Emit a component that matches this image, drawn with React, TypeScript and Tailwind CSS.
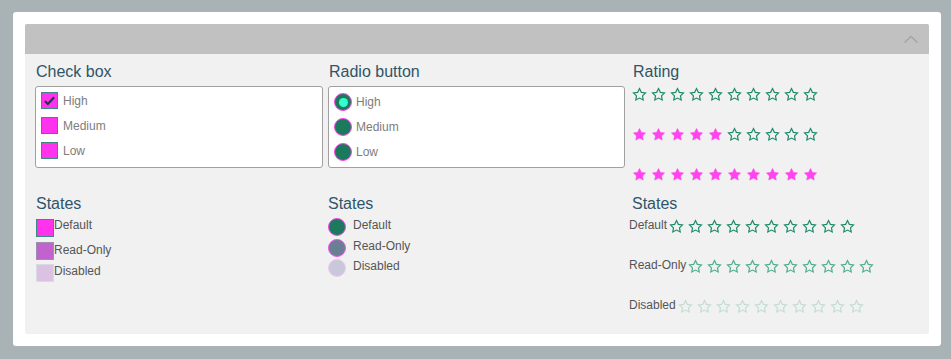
import React from "react";

const STAR = "M12 2.5l2.95 6.1 6.65.95-4.8 4.7 1.15 6.6L12 17.7l-5.95 3.15 1.15-6.6-4.8-4.7 6.65-.95z";

function Star({ filled, color, size = 15 }: { filled: boolean; color: string; size?: number }) {
  return (
    <svg width={size} height={size} viewBox="0 0 24 24" className="shrink-0">
      <path
        d={STAR}
        fill={filled ? color : "none"}
        stroke={color}
        strokeWidth={filled ? 1 : 1.9}
        strokeLinejoin="miter"
      />
    </svg>
  );
}

function Stars({ n, filledColor, outline, size = 15 }: { n: number; filledColor: string; outline: string; size?: number }) {
  return (
    <div className="flex gap-[4px]">
      {Array.from({ length: 10 }).map((_, i) => (
        <Star key={i} filled={i < n} color={i < n ? filledColor : outline} size={size} />
      ))}
    </div>
  );
}

function Check({ checked }: { checked?: boolean }) {
  return (
    <div className="w-[17px] h-[17px] bg-[#ff33ee] border border-[#3a8a82] flex items-center justify-center shrink-0">
      {checked && (
        <svg width="13" height="13" viewBox="0 0 14 14">
          <path d="M2 7.5l3.2 3.2L12 3.5" fill="none" stroke="#1f3445" strokeWidth="2.2" />
        </svg>
      )}
    </div>
  );
}

function Radio({ selected }: { selected?: boolean }) {
  return (
    <div className="w-[18px] h-[18px] rounded-full bg-[#1b7a5e] border-[1.5px] border-[#ff44ee] flex items-center justify-center shrink-0">
      {selected && <div className="w-[9px] h-[9px] rounded-full bg-[#33ffcc]" />}
    </div>
  );
}

const font = { fontFamily: "'Liberation Sans', Arial, sans-serif" };

export default function App() {
  return (
    <div className="w-[951px] h-[359px] bg-[#a9b2b4] pt-[12px] pl-[13px] pr-[10px] pb-[13px]" style={font}>
      <div className="w-full h-full bg-white rounded-[3px] p-[12px]">
        <div className="w-full h-full bg-[#f1f1f1] rounded-[2px] flex flex-col">
          <div className="h-[30px] bg-[#c1c1c1] rounded-t-[2px] flex items-center justify-end pr-[10px]">
            <svg width="16" height="10" viewBox="0 0 16 10">
              <path d="M1.5 8.5L8 2.5l6.5 6" fill="none" stroke="#a4a4a4" strokeWidth="1.4" />
            </svg>
          </div>
          <div className="flex pl-[10px] pt-[8px]">
            {/* Check box column */}
            <div className="w-[288px] flex flex-col">
              <div className="text-[16px] leading-[20px] text-[#2f5568] h-[24px] pl-[1px]">Check box</div>
              <div className="h-[82px] bg-white border border-[#a0a0a0] rounded-[3px] pl-[5px] pt-[5px] flex flex-col gap-[8px]">
                {["High", "Medium", "Low"].map((l, i) => (
                  <div key={l} className="flex items-center gap-[5px] h-[17px]">
                    <Check checked={i === 0} />
                    <span className="text-[12px] text-[#7d7d7d]">{l}</span>
                  </div>
                ))}
              </div>
              <div className="mt-[26px] text-[16px] leading-[20px] text-[#2f5568] pl-[1px]">States</div>
              <div className="flex flex-col gap-[4.5px] pl-[1px] mt-[5px]">
                <div className="flex items-start h-[18px]">
                  <div className="w-[18px] h-[18px] bg-[#ff33ee] border border-[#3a8a82]" />
                  <span className="text-[12px] leading-[12px] text-[#555]">Default</span>
                </div>
                <div className="flex items-start h-[18px]">
                  <div className="w-[18px] h-[18px] bg-[#c262cc] border border-[#9a90b0]" />
                  <span className="text-[12px] leading-[14px] text-[#555] mt-[1px]">Read-Only</span>
                </div>
                <div className="flex items-start h-[18px]">
                  <div className="w-[18px] h-[18px] bg-[#dcc2e2] border border-[#d8dbe4]" />
                  <span className="text-[12px] leading-[14px] text-[#555]">Disabled</span>
                </div>
              </div>
            </div>
            {/* Radio column */}
            <div className="w-[297px] ml-[5px] flex flex-col">
              <div className="text-[16px] leading-[20px] text-[#2f5568] h-[24px] pl-[1px]">Radio button</div>
              <div className="h-[82px] bg-white border border-[#a0a0a0] rounded-[3px] pl-[5px] pt-[6px] flex flex-col gap-[7px]">
                {["High", "Medium", "Low"].map((l, i) => (
                  <div key={l} className="flex items-center gap-[4px] h-[18px]">
                    <Radio selected={i === 0} />
                    <span className="text-[12px] text-[#7d7d7d]">{l}</span>
                  </div>
                ))}
              </div>
              <div className="mt-[26px] text-[16px] leading-[20px] text-[#2f5568]">States</div>
              <div className="flex flex-col gap-[2.5px] mt-[4px]">
                <div className="flex items-start h-[18px] gap-[7px]">
                  <div className="w-[18px] h-[18px] rounded-full bg-[#1b7a5e] border-[1.5px] border-[#ff44ee]" />
                  <span className="text-[12px] leading-[14px] text-[#555]">Default</span>
                </div>
                <div className="flex items-start h-[18px] gap-[7px]">
                  <div className="w-[18px] h-[18px] rounded-full bg-[#6a7f94] border-[1.5px] border-[#ee55ee]" />
                  <span className="text-[12px] leading-[14px] text-[#555]">Read-Only</span>
                </div>
                <div className="flex items-start h-[18px] gap-[7px]">
                  <div className="w-[18px] h-[18px] rounded-full bg-[#c9c7da] border-[1.5px] border-[#f2c8f0]" />
                  <span className="text-[12px] leading-[14px] text-[#555]">Disabled</span>
                </div>
              </div>
            </div>
            {/* Rating column */}
            <div className="ml-[7px] flex flex-col">
              <div className="text-[16px] leading-[20px] text-[#2f5568] h-[25px] pl-[1px]">Rating</div>
              <div className="flex flex-col gap-[25px]">
                <Stars n={0} filledColor="#ff44ee" outline="#1e8a6a" />
                <Stars n={5} filledColor="#ff44ee" outline="#1e8a6a" />
                <Stars n={10} filledColor="#ff44ee" outline="#1e8a6a" />
              </div>
              <div className="mt-[12px] text-[16px] leading-[20px] text-[#2f5568]">States</div>
              <div className="flex flex-col gap-[24px] -ml-[3px] mt-[4px]">
                <div className="flex items-start h-[16px]">
                  <span className="text-[12px] leading-[14px] text-[#555] mr-[2px]">Default</span>
                  <div className="mt-[1px]"><Stars n={0} filledColor="#ff44ee" outline="#1e8a6a" /></div>
                </div>
                <div className="flex items-start h-[16px]">
                  <span className="text-[12px] leading-[14px] text-[#555] mr-[2px]">Read-Only</span>
                  <div className="mt-[1px]"><Stars n={0} filledColor="#ff44ee" outline="#4fae8f" /></div>
                </div>
                <div className="flex items-start h-[16px]">
                  <span className="text-[12px] leading-[14px] text-[#555] mr-[2px]">Disabled</span>
                  <div className="mt-[1px]"><Stars n={0} filledColor="#ff44ee" outline="#c3ddd4" /></div>
                </div>
              </div>
            </div>
          </div>
        </div>
      </div>
    </div>
  );
}
